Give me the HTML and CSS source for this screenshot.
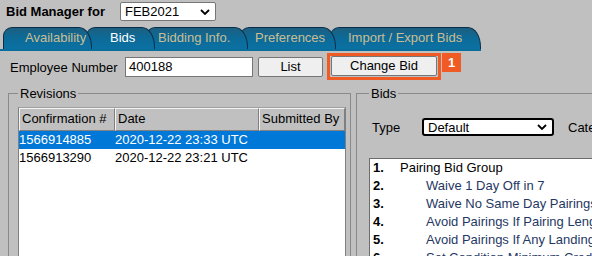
FILE: index.html
```html
<!DOCTYPE html>
<html>
<head>
<meta charset="utf-8">
<link rel="stylesheet" href="styles.css">
</head>
<body>
<div class="top">
  <span class="title">Bid Manager for</span>
  <div class="sel sel-month"><span>FEB2021</span><svg class="chev" width="10" height="6" viewBox="0 0 10 6"><path d="M1 1 L5 5 L9 1" fill="none" stroke="#000" stroke-width="1.8"/></svg></div>
</div>
<nav class="tabs">
  <div class="tab t1">Availability</div>
  <div class="tab t2 active">Bids</div>
  <div class="tab t3">Bidding Info.</div>
  <div class="tab t4">Preferences</div>
  <div class="tab t5">Import / Export Bids</div>
</nav>
<div class="emp">
  <label class="emp-label">Employee Number</label>
  <div class="input">400188</div>
  <div class="btn btn-list">List</div>
  <div class="highlight"><div class="btn btn-change">Change Bid</div></div>
  <div class="badge">1</div>
</div>
<div class="panels">
  <fieldset class="box revisions">
    <legend>Revisions</legend>
    <div class="grid">
      <div class="grow ghead">
        <div class="hc">Confirmation #</div>
        <div class="hc">Date</div>
        <div class="hc">Submitted By</div>
      </div>
      <div class="gbody">
        <div class="grow gr selected"><div>1566914885</div><div>2020-12-22 23:33 UTC</div><div></div></div>
        <div class="grow gr"><div>1566913290</div><div>2020-12-22 23:21 UTC</div><div></div></div>
      </div>
    </div>
  </fieldset>
  <fieldset class="box bids">
    <legend>Bids</legend>
    <div class="typerow">
      <span class="type-label">Type</span>
      <div class="sel sel-type"><span>Default</span><svg class="chev" width="10" height="6" viewBox="0 0 10 6"><path d="M1 1 L5 5 L9 1" fill="none" stroke="#000" stroke-width="1.8"/></svg></div>
      <span class="cate">Category</span>
    </div>
    <div class="bidlist">
      <div class="item"><b class="num">1.</b><span class="txt top-item">Pairing Bid Group</span></div>
      <div class="item"><b class="num">2.</b><span class="txt sub">Waive 1 Day Off in 7</span></div>
      <div class="item"><b class="num">3.</b><span class="txt sub">Waive No Same Day Pairings</span></div>
      <div class="item"><b class="num">4.</b><span class="txt sub">Avoid Pairings If Pairing Length</span></div>
      <div class="item"><b class="num">5.</b><span class="txt sub">Avoid Pairings If Any Landing In</span></div>
      <div class="item"><b class="num">6.</b><span class="txt sub">Set Condition Minimum Credit</span></div>
    </div>
  </fieldset>
</div>
</body>
</html>
```

FILE: styles.css
```css
* { box-sizing: border-box; }
html, body { margin: 0; padding: 0; }
body {
  background: #c0c0c0;
  font-family: "Liberation Sans", Arial, sans-serif;
  font-size: 13px;
  color: #000;
  width: 592px;
  height: 256px;
  overflow: hidden;
}

.top {
  display: flex;
  align-items: center;
  height: 22px;
  padding-left: 6px;
}
.title { font-weight: bold; width: 114px; }

.sel {
  display: flex;
  align-items: center;
  justify-content: space-between;
  background: #fff;
  border: 1px solid #767676;
  border-radius: 2px;
  padding: 0 5px 0 4px;
}
.sel-month { width: 96px; height: 19px; margin-top: 1px; }
.chev { display: block; }

.tabs {
  display: flex;
  margin-top: 5px;
  padding-left: 3px;
  width: 481px;
  height: 24px;
  border-bottom: 2px solid #0b6d9c;
}
.tab {
  position: relative;
  height: 22px;
  line-height: 20px;
  color: #cbbd92;
  background: linear-gradient(to bottom, #1d5f80 0%, #0d6a97 45%, #0a71a3 100%);
  border: 1px solid #0b2e48;
  border-bottom: none;
  border-radius: 9px 13px 0 0 / 9px 20px 0 0;
  white-space: nowrap;
}
.tab.active { color: #fff; }
.t1 { width: 89px; padding-left: 21px; z-index: 5; }
.t2 { width: 69px; padding-left: 23px; margin-left: -6px; z-index: 4; }
.t3 { width: 102px; padding-left: 11px; margin-left: -9px; z-index: 3; }
.t4 { width: 96px; padding-left: 14px; margin-left: -8px; z-index: 2; }
.t5 { width: 151px; padding-left: 17px; margin-left: -6px; z-index: 1; }

.emp {
  display: flex;
  align-items: center;
  height: 28px;
  margin-top: 2px;
  padding-left: 10px;
}
.emp-label { width: 115px; }
.input {
  width: 128px;
  height: 20px;
  background: #fff;
  border: 1px solid #767676;
  padding-left: 3px;
  line-height: 18px;
}
.btn {
  height: 20px;
  line-height: 18px;
  text-align: center;
  background: #efefef;
  border: 1px solid #767676;
  border-radius: 2px;
}
.btn-list { width: 65px; margin-left: 5px; }
.highlight {
  margin-left: 4px;
  border: 3px solid #f05a24;
  padding: 0 1px 1px 1px;
  align-self: flex-start;
}
.btn-change { width: 106px; }
.badge {
  align-self: flex-start;
  margin-left: 1px;
  width: 19px;
  height: 19px;
  background: #f05a24;
  color: #fff;
  font-weight: bold;
  text-align: center;
  line-height: 19px;
}

.panels {
  display: flex;
  margin-top: 5px;
}
.box {
  margin: 0;
  border: 1px solid #8a8a8a;
  height: 240px;
  min-width: 0;
  flex-shrink: 0;
}
.box legend {
  padding: 0 2px;
  margin-left: 0;
  line-height: 15px;
}
.revisions {
  width: 343px;
  margin-left: 8px;
  padding: 6px 4px 0 9px;
}
.bids {
  width: 300px;
  margin-left: 5px;
  padding: 0 0 0 12px;
}

.grid {
  width: 328px;
  border: 1px solid #808080;
  border-top-color: #a0a0a0;
}
.grow {
  display: grid;
  grid-template-columns: 96px 144px 86px;
}
.hc {
  height: 23px;
  line-height: 20px;
  padding-left: 2px;
  border: 1px solid;
  border-color: #f4f4f4 #808080 #808080 #f4f4f4;
  background: #c0c0c0;
  white-space: nowrap;
}
.gbody { background: #fff; height: 140px; }
.gr { height: 18px; line-height: 18px; }
.gr > div { padding-left: 0; white-space: nowrap; }
.gr.selected { background: #0078d7; color: #fff; }

.typerow {
  display: flex;
  align-items: center;
  height: 18px;
  margin-top: 17px;
  padding-left: 3px;
}
.type-label { width: 50px; flex-shrink: 0; }
.sel-type {
  width: 132px;
  height: 18px;
  border: 2px solid #000;
  border-radius: 3px;
  padding: 0 5px 0 4px;
  flex-shrink: 0;
}
.cate { margin-left: 14px; white-space: nowrap; }

.bidlist {
  margin-top: 22px;
  background: #fff;
  border: 1px solid #6d6d6d;
  padding: 0 0 0 3px;
  height: 120px;
  overflow: hidden;
}
.item { display: flex; height: 18px; line-height: 18px; white-space: nowrap; }
.num { width: 27px; flex-shrink: 0; }
.sub { padding-left: 26px; color: #1f3864; }
```
